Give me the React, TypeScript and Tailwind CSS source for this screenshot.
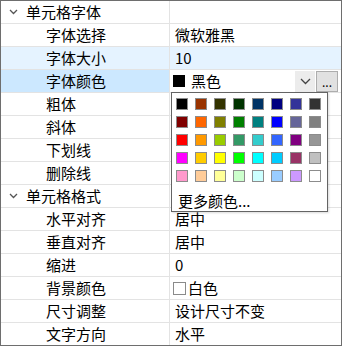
import React from "react";

const font = { fontFamily: '"Noto Sans CJK SC", "Noto Sans", sans-serif' };

type Row = { kind: "header" | "item"; label: string; value?: React.ReactNode; bg?: string };

const palette = [
  ["#000000", "#993300", "#333300", "#003300", "#003366", "#000080", "#333399", "#333333"],
  ["#800000", "#FF6600", "#808000", "#008000", "#008080", "#0000FF", "#666699", "#808080"],
  ["#FF0000", "#FF9900", "#99CC00", "#339966", "#33CCCC", "#3366FF", "#800080", "#969696"],
  ["#FF00FF", "#FFCC00", "#FFFF00", "#00FF00", "#00FFFF", "#00CCFF", "#993366", "#C0C0C0"],
  ["#FF99CC", "#FFCC99", "#FFFF99", "#CCFFCC", "#CCFFFF", "#99CCFF", "#CC99FF", "#FFFFFF"],
];

function Chevron() {
  return (
    <svg width="9" height="6" viewBox="0 0 9 6" className="shrink-0">
      <path d="M1 1 L4.5 4.5 L8 1" fill="none" stroke="#555" strokeWidth="1.3" />
    </svg>
  );
}

export default function App() {
  const rows: Row[] = [
    { kind: "header", label: "单元格字体" },
    { kind: "item", label: "字体选择", value: "微软雅黑" },
    { kind: "item", label: "字体大小", value: "10", bg: "hover" },
    { kind: "item", label: "字体颜色", value: "combo", bg: "sel" },
    { kind: "item", label: "粗体" },
    { kind: "item", label: "斜体" },
    { kind: "item", label: "下划线" },
    { kind: "item", label: "删除线" },
    { kind: "header", label: "单元格格式" },
    { kind: "item", label: "水平对齐", value: "居中" },
    { kind: "item", label: "垂直对齐", value: "居中" },
    { kind: "item", label: "缩进", value: "0" },
    { kind: "item", label: "背景颜色", value: "white" },
    { kind: "item", label: "尺寸调整", value: "设计尺寸不变" },
    { kind: "item", label: "文字方向", value: "水平" },
  ];

  return (
    <div className="w-[344px] h-[348px] bg-white relative text-[15px] text-black" style={font}>
      <div className="w-[342px] h-[346px] border border-[#6e6e6e] flex flex-col">
        {rows.map((r, i) => {
          const last = i === rows.length - 1;
          const rowBg = r.bg === "hover" ? "bg-[#e5f3ff]" : "";
          const labelBg = r.bg === "sel" ? "bg-[#cce8ff]" : "";
          return (
            <div
              key={i}
              className={`flex ${last ? "h-[22px]" : "h-[23px] border-b border-[#e3e3e3]"} ${rowBg}`}
            >
              <div
                className={`w-[169px] shrink-0 border-r border-[#e3e3e3] flex items-center leading-[22px] ${labelBg} ${
                  r.kind === "header" ? "pl-[8px]" : "pl-[45px]"
                }`}
              >
                {r.kind === "header" ? (
                  <>
                    <Chevron />
                    <span className="ml-[8px]">{r.label}</span>
                  </>
                ) : (
                  <span>{r.label}</span>
                )}
              </div>
              <div className="flex-1 flex items-center leading-[22px] min-w-0">
                {r.value === "combo" ? (
                  <div className="flex items-center h-full w-full">
                    <div className="flex items-center bg-white h-[21px] w-[125px] pl-[3px]">
                      <div className="w-[12px] h-[12px] bg-black" />
                      <span className="ml-[6px]">黑色</span>
                    </div>
                    <div className="w-[20px] h-[21px] bg-[#ececec] flex items-center justify-center">
                      <svg width="11" height="7" viewBox="0 0 11 7">
                        <path d="M1 1 L5.5 5.5 L10 1" fill="none" stroke="#444" strokeWidth="1.3" />
                      </svg>
                    </div>
                    <div className="ml-[1px] w-[22px] h-[21px] bg-[#e1e1e1] border border-[#adadad] flex items-end justify-center pb-[3px] text-[12px] leading-[12px]">
                      ...
                    </div>
                  </div>
                ) : r.value === "white" ? (
                  <div className="flex items-center pl-[3px]">
                    <div className="w-[13px] h-[13px] bg-white border border-[#8a8a8a]" />
                    <span className="ml-[2px]">白色</span>
                  </div>
                ) : r.value ? (
                  <span className="pl-[5px]">{r.value}</span>
                ) : null}
              </div>
            </div>
          );
        })}
      </div>

      <div className="absolute left-[171px] top-[92px] w-[157px] h-[120px] bg-white border border-[#646464] shadow-[1px_1px_2px_rgba(0,0,0,0.15)] pl-[4px] pt-[5px]">
        <div className="grid grid-cols-[repeat(8,12px)] gap-x-[7px] gap-y-[6px]">
          {palette.flat().map((c, i) => (
            <div key={i} className="w-[12px] h-[12px] border border-[#8c8c8c]" style={{ backgroundColor: c }} />
          ))}
        </div>
        <div className="mt-[9px] pl-[2px] leading-[20px]">更多颜色...</div>
      </div>
    </div>
  );
}
